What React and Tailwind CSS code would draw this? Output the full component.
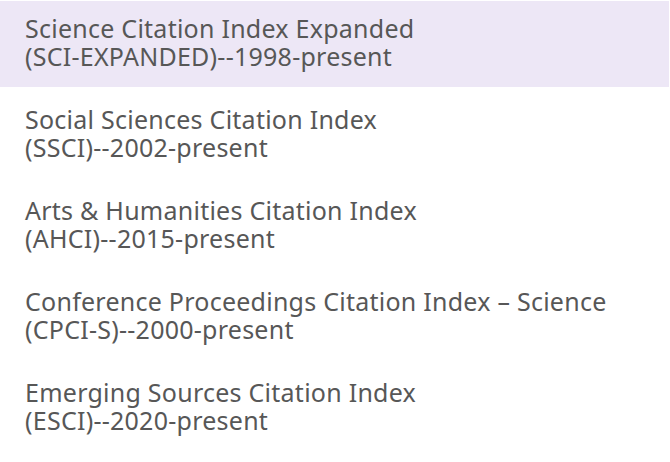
const items = [
  ["Science Citation Index Expanded", "(SCI-EXPANDED)--1998-present"],
  ["Social Sciences Citation Index", "(SSCI)--2002-present"],
  ["Arts & Humanities Citation Index", "(AHCI)--2015-present"],
  ["Conference Proceedings Citation Index \u2013 Science", "(CPCI-S)--2000-present"],
  ["Emerging Sources Citation Index", "(ESCI)--2020-present"],
];

export default function App() {
  return (
    <div className="min-h-[462px] bg-white pt-[1px]">
      <ul
        className="w-[669px] flex flex-col gap-[5px] text-[#575757] text-[25px] leading-[28px] tracking-[0.25px]"
        style={{ fontFamily: '"Noto Sans", sans-serif' }}
      >
        {items.map(([a, b], i) => (
          <li
            key={a}
            className={
              "pl-[25px] pr-4 pt-[13px] pb-[17px] " + (i === 0 ? "bg-[#ede7f6]" : "")
            }
          >
            <div>{a}</div>
            <div>{b}</div>
          </li>
        ))}
      </ul>
    </div>
  );
}
